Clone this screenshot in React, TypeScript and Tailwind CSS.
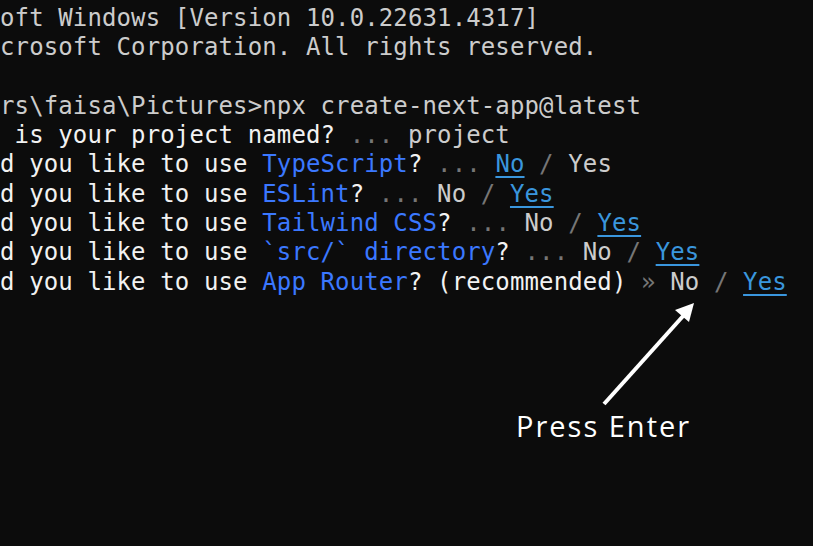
import React from 'react';

type Seg = { t: string; c?: 'fg' | 'blue' | 'cyan' | 'dim' | 'white'; u?: boolean };

const colors: Record<string, string> = {
  fg: 'text-[#cccccc]',
  blue: 'text-[#3b78ff]',
  cyan: 'text-[#3a96dd]',
  dim: 'text-[#767676]',
  white: 'text-[#f2f2f2]',
};

// each row is what's left visible of the terminal line after the crop
const rows: Seg[][] = [
  [{ t: 'oft Windows [Version 10.0.22631.4317]' }],
  [{ t: 'crosoft Corporation. All rights reserved.' }],
  [{ t: '' }],
  [{ t: 'rs\\faisa\\Pictures>npx create-next-app@latest' }],
  [
    { t: ' is your project named?', c: 'white' },
    { t: ' ... ', c: 'dim' },
    { t: 'project' },
  ],
  [
    { t: 'd you like to use ', c: 'white' },
    { t: 'TypeScript', c: 'blue' },
    { t: '?', c: 'white' },
    { t: ' ... ', c: 'dim' },
    { t: 'No', c: 'cyan', u: true },
    { t: ' / ', c: 'dim' },
    { t: 'Yes' },
  ],
  [
    { t: 'd you like to use ', c: 'white' },
    { t: 'ESLint', c: 'blue' },
    { t: '?', c: 'white' },
    { t: ' ... ', c: 'dim' },
    { t: 'No' },
    { t: ' / ', c: 'dim' },
    { t: 'Yes', c: 'cyan', u: true },
  ],
  [
    { t: 'd you like to use ', c: 'white' },
    { t: 'Tailwind CSS', c: 'blue' },
    { t: '?', c: 'white' },
    { t: ' ... ', c: 'dim' },
    { t: 'No' },
    { t: ' / ', c: 'dim' },
    { t: 'Yes', c: 'cyan', u: true },
  ],
  [
    { t: 'd you like to use ', c: 'white' },
    { t: "`src/` directory", c: 'blue' },
    { t: '?', c: 'white' },
    { t: ' ... ', c: 'dim' },
    { t: 'No' },
    { t: ' / ', c: 'dim' },
    { t: 'Yes', c: 'cyan', u: true },
  ],
  [
    { t: 'd you like to use ', c: 'white' },
    { t: 'App Router', c: 'blue' },
    { t: '? (recommended) ', c: 'white' },
    { t: '» ', c: 'dim' },
    { t: 'No' },
    { t: ' / ', c: 'dim' },
    { t: 'Yes', c: 'cyan', u: true },
  ],
];

export default function App() {
  return (
    <div className="relative h-[546px] w-[813px] overflow-hidden bg-[#0c0c0c]">
      <div className="flex flex-col pt-[4px] font-['DejaVu_Sans_Mono',monospace] text-[24px] leading-[29.3px] tracking-[0.12px]">
        {rows.map((row, i) => (
          <div key={i} className="h-[29.3px] whitespace-pre">
            {row.map((s, j) => (
              <span
                key={j}
                className={`${colors[s.c ?? 'fg']} ${
                  s.u ? 'underline decoration-2 underline-offset-[4px]' : ''
                }`}
              >
                {s.t}
              </span>
            ))}
          </div>
        ))}
      </div>

      {/* annotation */}
      <svg className="absolute left-0 top-0" width="813" height="546" viewBox="0 0 813 546">
        <line x1="604" y1="404" x2="684" y2="315" stroke="#ffffff" strokeWidth="4" />
        <polygon points="694,303 689,322 675,310" fill="#ffffff" />
      </svg>
      <div className="absolute left-[516px] top-[404px] font-['Open_Sans',sans-serif] text-[29px] leading-[44px] tracking-[2px] text-white">
        Press Enter
      </div>
    </div>
  );
}
